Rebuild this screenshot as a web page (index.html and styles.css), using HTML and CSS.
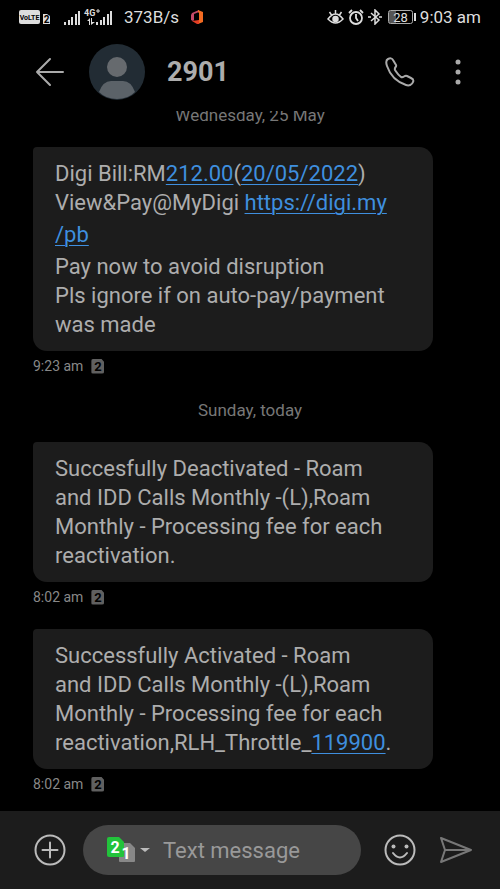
FILE: index.html
```html
<!DOCTYPE html>
<html lang="en">
<head>
<meta charset="utf-8">
<meta name="viewport" content="width=device-width, initial-scale=1">
<title>2901</title>
<link rel="stylesheet" href="styles.css">
</head>
<body>
<div class="app">
  <div class="status">
    <div class="status-group">
      <svg class="volte" width="31" height="16" viewBox="0 0 31 16" aria-hidden="true">
        <rect x="0" y="1" width="21" height="14" rx="2" fill="#ddd"/>
        <text x="10.500" y="11" font-size="7" font-weight="700" text-anchor="middle" fill="#000">VoLTE</text>
        <path d="M24 5h4l3 2v8h-7z" fill="#ddd"/>
        <text x="27.500" y="14" font-size="10" font-weight="700" text-anchor="middle" fill="#000">2</text>
      </svg>
      <svg class="signal" width="50" height="18" viewBox="0 0 50 18" aria-hidden="true">
        <g fill="#ddd">
          <path d="M0 14h2v3H0zM4 12h2v5H4zM7 9h2v8H7zM11 6h2v11h-2zM14 3h2v14h-2zM32 14h2v3h-2zM36 12h2v5h-2zM39 9h2v8h-2zM43 6h2v11h-2zM46 3h2v14h-2z"/>
          <path d="M23 13l3-3v7h-1v-4zM27 10h1v4h3l-4 3z"/>
        </g>
        <text x="20" y="8" font-size="9" font-weight="700" fill="#ddd">4G</text>
        <path d="M32 3h4M34 1v4" stroke="#ddd"/>
      </svg>
      <span>373B/s</span>
      <svg class="office" width="12" height="14" viewBox="0 0 12 14" aria-hidden="true">
        <path d="M8 0 1 3 0 5v5l2 1 1-1V4l5-2z" fill="#c54a68"/>
        <path d="M7 0l5 2v10l-5 2V11l1-1V3L7 2z" fill="#f26a21"/>
        <path d="M1 11l7-1v4H6z" fill="#e33d24"/>
      </svg>
    </div>
    <div class="status-group status-right">
      <svg width="17" height="16" viewBox="0 0 17 16" fill="none" stroke="#ddd" stroke-width="1.500" aria-hidden="true">
        <path d="M1 10q7.500-10 15 0-7.500 8-15 0zM8.500 1v4M2.500 3l2 3M14.500 3l-2 3"/><circle cx="8.500" cy="10" r="2.500" fill="#ddd"/>
      </svg>
      <svg width="16" height="16" viewBox="0 0 16 16" fill="none" stroke="#ddd" stroke-width="1.800" aria-hidden="true">
        <circle cx="8" cy="9" r="6"/><path d="M8 5v4l2 3M1 4l3-3M15 4l-3-3"/>
      </svg>
      <svg width="14" height="16" viewBox="0 0 14 16" fill="none" stroke="#ddd" stroke-width="1.500" aria-hidden="true">
        <path d="M3 4l8 7-4 4V1l4 4-8 7"/><path d="M0 8h3M11 8h3"/>
      </svg>
      <svg class="battery" width="28" height="16" viewBox="0 0 28 16" aria-hidden="true">
        <rect x="1" y="2" width="7" height="12" fill="#555"/>
        <rect x=".5" y="1.500" width="24" height="13" rx="2" fill="none" stroke="#aaa"/>
        <path d="M26 4h2v8h-2z" fill="#ddd"/>
        <text x="12.500" y="13" font-size="13" text-anchor="middle" fill="#ddd">28</text>
      </svg>
      <span>9:03 am</span>
    </div>
  </div>

  <header class="header">
    <button class="icon-button" aria-label="Back">
      <svg width="30" height="30" viewBox="0 0 30 30" fill="none" stroke="#aaa" stroke-width="2" stroke-linecap="round" stroke-linejoin="round"><path d="M28 15H2M15 2 2 15l13 13"/></svg>
    </button>
    <svg class="avatar" width="56" height="56" viewBox="0 0 56 56" aria-hidden="true">
      <circle cx="28" cy="28" r="28" fill="#222c34"/>
      <circle cx="28" cy="23" r="10" fill="#666a6e"/>
      <path d="M10 48q4-11 12-11h12q8 0 12 11-7 7-18 7t-18-7z" fill="#5b6268"/>
    </svg>
    <h1 class="title">2901</h1>
    <button class="icon-button" aria-label="Call">
      <svg width="30" height="30" viewBox="0 0 30 30" fill="none" stroke="#aaa" stroke-width="2" stroke-linejoin="round"><path d="M3 2C1 3 1 6 2 9c3 9 10 16 19 19 3 1 6 0 7-3 1-2 0-3-2-4l-4-2c-3-1-3 2-6 1-3-2-4-4-6-7-1-3 2-3 1-5L8 3C7 1 5 1 3 2z"/></svg>
    </button>
    <button class="icon-button menu" aria-label="More options">
      <svg width="6" height="28" viewBox="0 0 6 28" fill="#aaa"><circle cx="3" cy="4" r="2.500"/><circle cx="3" cy="14" r="2.500"/><circle cx="3" cy="24" r="2.500"/></svg>
    </button>
  </header>

  <main class="thread">
    <div class="date">Wednesday, 25 May</div>
    <div class="bubble">Digi Bill:RM<a href="#">212.00</a>(<a href="#">20/05/2022</a>)<br>View&amp;Pay@MyDigi <a href="#">https://digi.my<br><span class="tall">/pb</span></a><br>Pay now to avoid disruption<br>Pls ignore if on auto-pay/payment was made</div>
    <div class="meta">9:23 am <span class="sim">2</span></div>
    <div class="date">Sunday, today</div>
    <div class="bubble">Succesfully Deactivated - Roam and IDD Calls Monthly -(L),Roam Monthly - Processing fee for each reactivation.</div>
    <div class="meta meta-gap">8:02 am <span class="sim">2</span></div>
    <div class="bubble">Successfully Activated - Roam and&nbsp;IDD Calls Monthly -(L),Roam Monthly - Processing fee for each reactivation,RLH_Throttle_<a href="#">119900</a>.</div>
    <div class="meta">8:02 am <span class="sim">2</span></div>
  </main>

  <footer class="composer">
    <button class="icon-button" aria-label="Add attachment">
      <svg width="32" height="32" viewBox="0 0 32 32" fill="none" stroke="#bbb" stroke-width="2" stroke-linecap="round"><circle cx="16" cy="16" r="14.500"/><path d="M8.500 16h15M16 8.500v15"/></svg>
    </button>
    <div class="field">
      <button class="icon-button" aria-label="Choose SIM">
        <svg width="44" height="28" viewBox="0 0 44 28">
          <path d="M14 7h9l5 5v13q0 1-1 1H13q-1 0-1-1V9z" fill="#888"/>
          <path d="M2 1h10l5 5v14q0 1-1 1H2q-2 0-2-2V3q0-2 2-2z" fill="#22c33b"/>
          <text x="8" y="17" font-size="16" font-weight="700" text-anchor="middle" fill="#fff">2</text>
          <text x="19" y="23" font-size="16" font-weight="700" text-anchor="middle" fill="#fff">1</text>
          <path d="M33 12h10l-5 4z" fill="#bbb"/>
        </svg>
      </button>
      <input class="input" type="text" aria-label="Text message" placeholder="Text message">
    </div>
    <button class="icon-button" aria-label="Emoji">
      <svg width="32" height="32" viewBox="0 0 32 32" fill="none" stroke="#bbb" stroke-width="2" stroke-linecap="round"><circle cx="16" cy="16" r="14.500"/><path d="M9 19q7 9 14 0"/><g fill="#bbb" stroke="none"><circle cx="9.500" cy="12.500" r="2"/><circle cx="22.500" cy="12.500" r="2"/></g></svg>
    </button>
    <button class="icon-button" aria-label="Send">
      <svg width="32" height="28" viewBox="0 0 32 28" fill="none" stroke="#777" stroke-width="2" stroke-linejoin="round"><path d="M1 2l30 12L1 26l4-12zM5 14h26"/></svg>
    </button>
  </footer>
</div>
</body>
</html>
```
FILE: styles.css
```css
* {
  box-sizing: border-box;
}

body {
  margin: 0;
  background: #000;
  color: #adadad;
  font-family: Roboto, "Liberation Sans", sans-serif;
}

svg {
  display: block;
  flex: none;
}

svg text {
  font-family: Roboto, "Liberation Sans", sans-serif;
}

.app {
  display: flex;
  flex-direction: column;
  height: 100vh;
}

.status {
  display: flex;
  flex: none;
  justify-content: space-between;
  height: 36px;
  padding: 0 19px 2px;
  color: #ddd;
  font-size: 17px;
}

.status-group {
  display: flex;
  align-items: center;
}

.status-right {
  gap: 4px;
}

.signal {
  margin: 0 10px 0 14px;
}

.office {
  margin-left: 12px;
}

.battery {
  margin-left: 2px;
}

.header {
  display: flex;
  flex: none;
  align-items: center;
  height: 75px;
  padding: 0 39px 3px 35px;
}

.icon-button {
  display: flex;
  flex: none;
  align-items: center;
  padding: 0;
  border: 0;
  background: none;
}

.avatar {
  margin: 0 22px 0 24px;
}

.title {
  flex: 1;
  margin: 0;
  font-size: 27px;
  font-weight: 700;
}

.menu {
  margin-left: 40px;
}

.thread {
  display: flex;
  flex: 1;
  flex-direction: column;
  justify-content: flex-end;
  min-height: 0;
  padding: 0 33px 17px;
  overflow: hidden;
}

.date {
  flex: none;
  margin: 22px 0 20px;
  color: #777;
  font-size: 17px;
  line-height: 24px;
  text-align: center;
}

.bubble {
  flex: none;
  width: 400px;
  max-width: 100%;
  padding: 12px 36px 12px 22px;
  border-radius: 4px 14px 14px 14px;
  background: #1c1c1c;
  font-size: 22px;
  line-height: 29px;
}

.bubble a {
  color: #3f8fdf;
  text-decoration-thickness: 1px;
  text-underline-offset: 3px;
}

.tall {
  line-height: 35px;
}

.meta {
  display: flex;
  flex: none;
  align-items: center;
  gap: 8px;
  height: 20px;
  margin-top: 5px;
  color: #888;
  font-size: 14px;
}

.meta-gap {
  margin-bottom: 22px;
}

.sim {
  width: 13px;
  border-radius: 2px;
  background: #606060;
  clip-path: polygon(0 0, 75% 0, 100% 25%, 100% 100%, 0 100%);
  color: #000;
  font-size: 13px;
  font-weight: 700;
  line-height: 15px;
  text-align: center;
}

.composer {
  display: flex;
  flex: none;
  align-items: center;
  height: 78px;
  padding: 0 28px 0 34px;
  background: #1c1c1c;
}

.field {
  display: flex;
  flex: 1;
  align-items: center;
  gap: 12px;
  min-width: 0;
  height: 50px;
  margin: 0 23px 0 17px;
  padding: 0 24px;
  border-radius: 25px;
  background: #464646;
}

.input {
  flex: 1;
  min-width: 0;
  padding: 0;
  border: 0;
  outline: 0;
  background: none;
  color: #ddd;
  font-family: inherit;
  font-size: 22px;
}

.input::placeholder {
  color: #999;
  opacity: 1;
}

.field + .icon-button {
  margin-right: 24px;
}
```
